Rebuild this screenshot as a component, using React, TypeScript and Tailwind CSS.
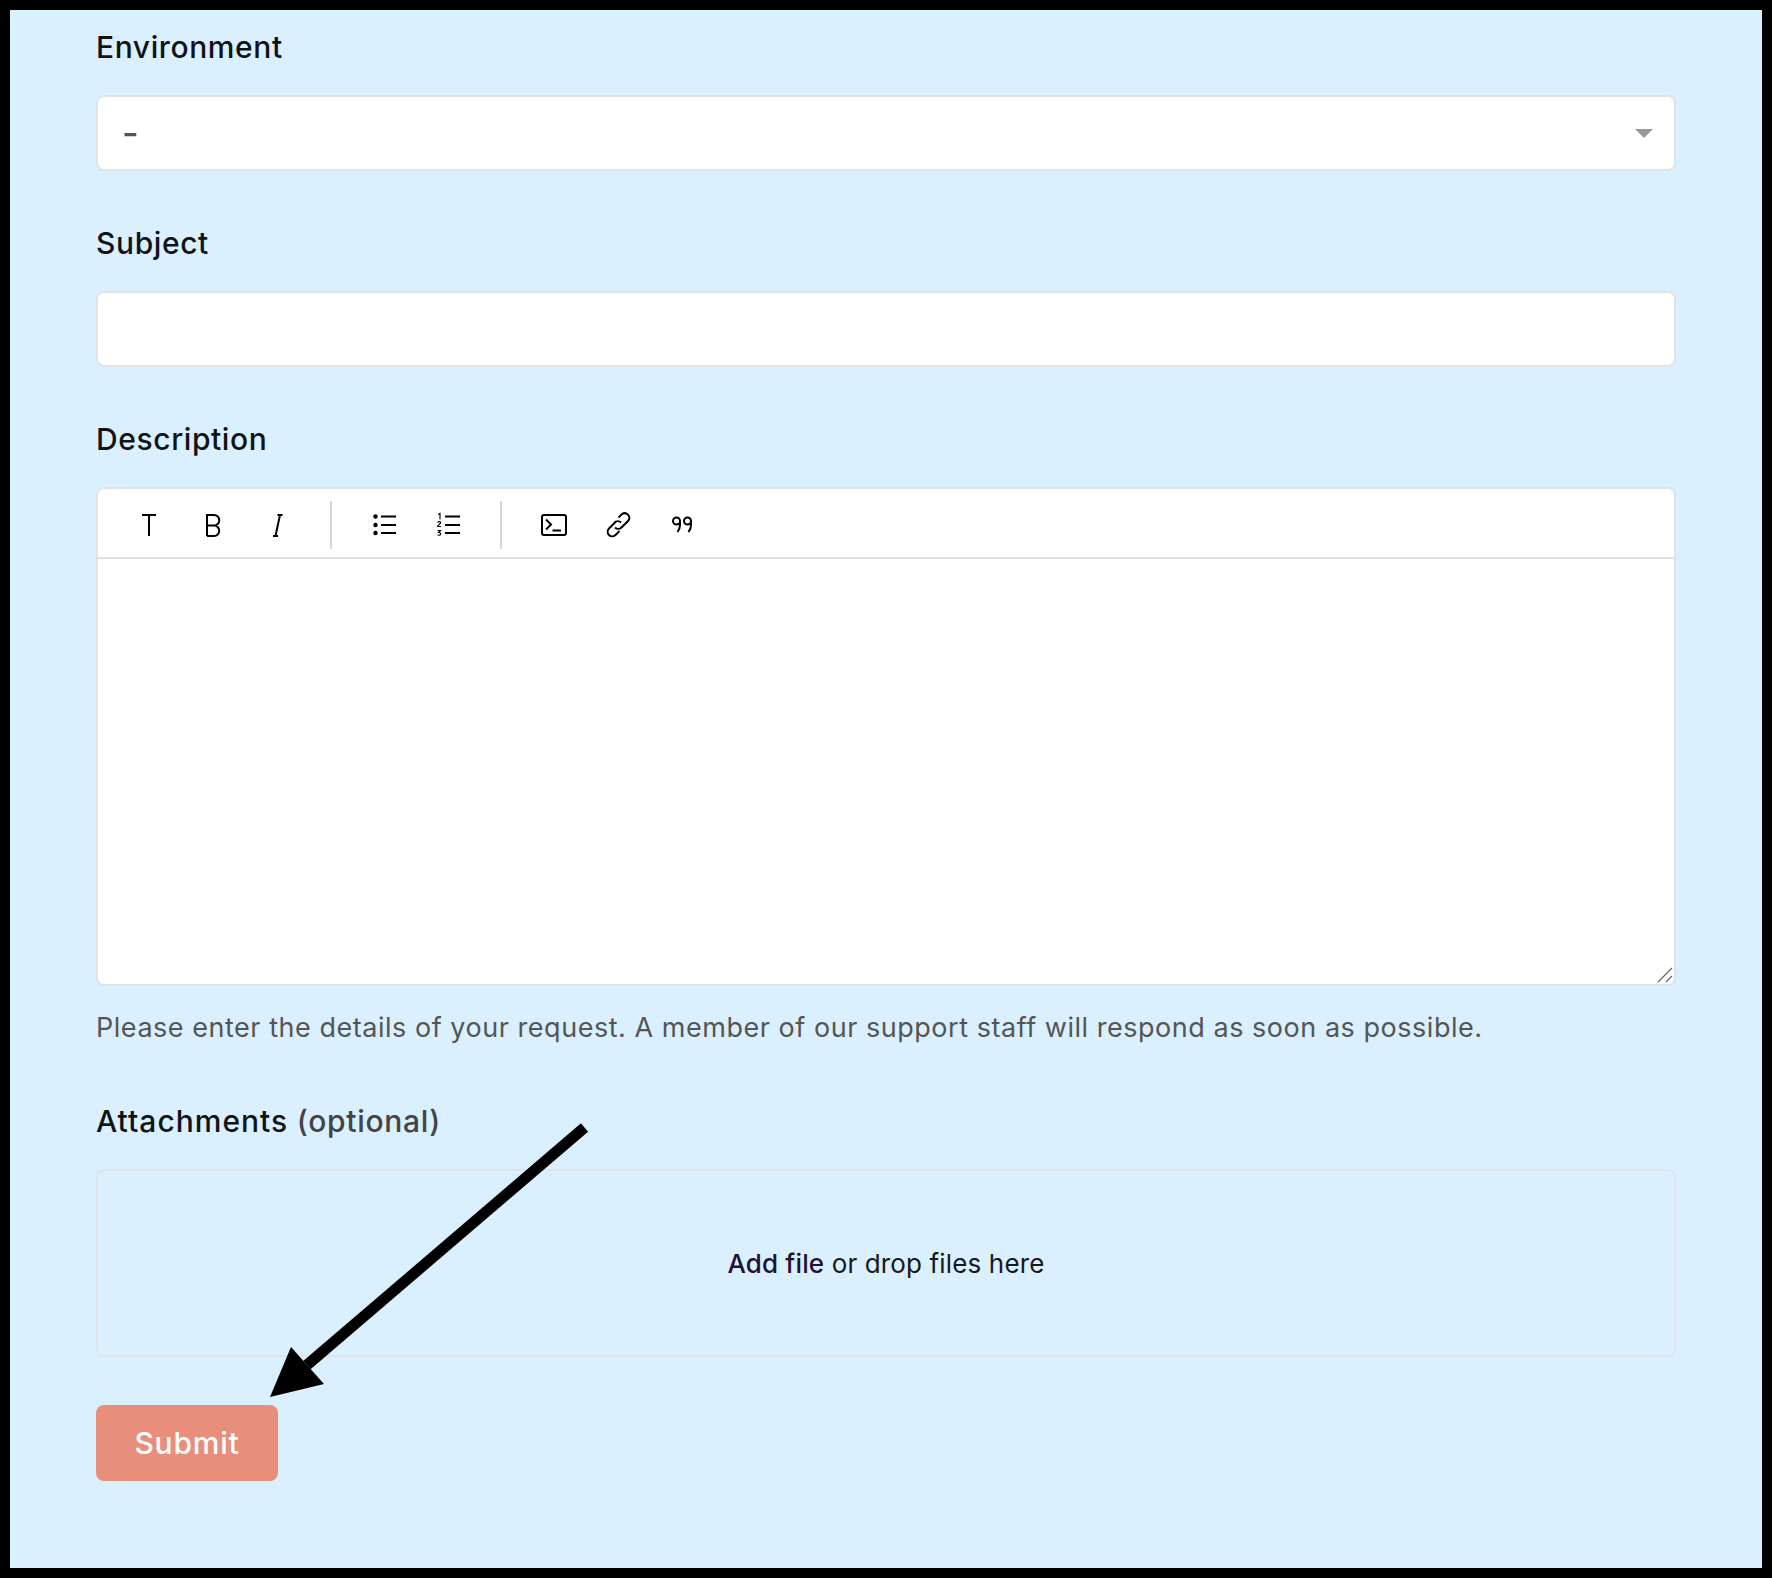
import React from "react";

const font = "font-['Inter','Liberation_Sans',sans-serif]";

function Label({ children }: { children: React.ReactNode }) {
  return <div className="h-[40px] text-[30px] leading-[40px] font-medium tracking-[0.6px] text-[#111417]">{children}</div>;
}

function Icon({ children }: { children: React.ReactNode }) {
  return (
    <svg viewBox="0 0 32 32" className="w-[32px] h-[32px]" fill="none" stroke="#000" strokeWidth="2">
      {children}
    </svg>
  );
}

function Toolbar() {
  return (
    <div className="h-[70px] border-b-2 border-[#e0e0e0] flex items-center pl-[35px] pt-[3px]">
      <div className="flex items-center gap-[32px]">
        <Icon><path d="M9 6h14M16 6v21" /></Icon>
        <Icon><path d="M10 27V6h7a5 5 0 0 1 0 10.500h-7M17 16.500a5.200 5.200 0 0 1 0 10.500h-7" /></Icon>
        <Icon><path d="M19 6l-4.500 21M16.500 6H21.500M12 27h5" /></Icon>
      </div>
      <div className="w-[2px] h-[48px] bg-[#d8d8d8] ml-[37px] mr-[37px]" />
      <div className="flex items-center gap-[32px]">
        <Icon>
          <circle cx="6.500" cy="7.500" r="2.200" fill="#000" stroke="none" />
          <circle cx="6.500" cy="16" r="2.200" fill="#000" stroke="none" />
          <circle cx="6.500" cy="24" r="2.200" fill="#000" stroke="none" />
          <path d="M12 7.500h15M12 16h15M12 24h15" />
        </Icon>
        <Icon>
          <path d="M5 5.500l2-1v6M4.500 13.500c1-1.500 3.500-1 3 .5-.3 1-3 2.500-3 3.500h3.500M4.500 21.500h3l-2 2c2 0 2.500 1 2 2s-2.500 1-3 .3" strokeWidth="1.100" />
          <path d="M12 7.500h15M12 16h15M12 24h15" />
        </Icon>
      </div>
      <div className="w-[2px] h-[48px] bg-[#d8d8d8] ml-[35px] mr-[36px]" />
      <div className="flex items-center gap-[32px]">
        <Icon>
          <rect x="4" y="6" width="24" height="20" rx="2" />
          <path d="M8 10.500l5 5-5 5M14.500 21.500h8.500" />
        </Icon>
        <Icon>
          <path d="M14 12.500l-7 7a4.700 4.700 0 0 0 0 6.500a4.700 4.700 0 0 0 6.500 0l4-4M13 18.500a4.700 4.700 0 0 0 6.500 0l7-7a4.700 4.700 0 0 0-6.500-6.500l-3.500 3.500M19 13.500a4.700 4.700 0 0 0-6.500 0" />
        </Icon>
        <Icon>
          <circle cx="10.500" cy="12" r="3.500" />
          <circle cx="21.500" cy="12" r="3.500" />
          <path d="M14 12v4c0 3-.8 5-2.500 7M25 12v4c0 3-.8 5-2.500 7" />
        </Icon>
      </div>
    </div>
  );
}

export default function App() {
  return (
    <div className={`relative w-[1772px] h-[1578px] bg-black p-[10px] ${font}`}>
      <div className="h-[1558px] bg-[#daf0fe] pl-[86px] pr-[86px] pt-[17px]">
        <Label>Environment</Label>
        <div className="mt-[28px] h-[76px] bg-white border-2 border-[#e0e4e8] rounded-[8px] flex items-center justify-between pl-[24px] pr-[21px]">
          <span className="text-[36px] leading-[40px] text-[#555] font-medium">-</span>
          <div className="w-0 h-0 border-x-[9px] border-x-transparent border-t-[9px] border-t-[#999]" />
        </div>

        <div className="mt-[52px]"><Label>Subject</Label></div>
        <div className="mt-[28px] h-[76px] bg-white border-2 border-[#e0e4e8] rounded-[8px]" />

        <div className="mt-[52px]"><Label>Description</Label></div>
        <div className="relative mt-[28px] h-[499px] bg-white border-2 border-[#e0e4e8] rounded-[8px]">
          <Toolbar />
          <svg viewBox="0 0 16 16" className="absolute right-[1px] bottom-[1px] w-[16px] h-[16px]" stroke="#666" strokeWidth="1.300">
            <path d="M1 15L15 1M9 15l6-6" />
          </svg>
        </div>
        <div className="mt-[22px] h-[40px] text-[27px] leading-[40px] tracking-[0.53px] text-[#555]">
          Please enter the details of your request. A member of our support staff will respond as soon as possible.
        </div>

        <div className="mt-[53px]">
          <Label><span className="tracking-[1px]">Attachments</span> <span className="text-[#444] tracking-[0.7px]">(optional)</span></Label>
        </div>
        <div className="mt-[28px] h-[188px] border-2 border-[#e0e4e8] rounded-[8px] flex items-center justify-center text-[26px] tracking-[0.14px] text-[#15191c]">
          <span><span className="font-medium text-[#1f1235]">Add file</span> or drop files here</span>
        </div>

        <button className="mt-[48px] block w-[182px] h-[76px] bg-[#e88f7b] rounded-[8px] text-white text-[30px] tracking-[0.8px] font-medium">Submit</button>
      </div>
      <svg className="absolute left-0 top-0 pointer-events-none" width="1772" height="1578" viewBox="0 0 1772 1578">
        <path d="M584.500 1127.500L307 1365" stroke="#000" strokeWidth="11" fill="none" />
        <path d="M270 1397L291 1347L324 1384Z" fill="#000" />
      </svg>
    </div>
  );
}
